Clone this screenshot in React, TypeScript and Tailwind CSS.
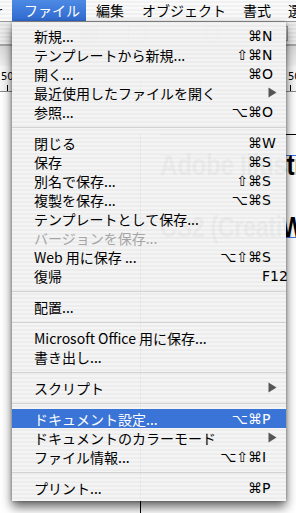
import React from "react"

type Item =
  | { sep: true }
  | {
      sep?: false
      label: string
      mods?: string
      k?: string
      arrow?: boolean
      disabled?: boolean
      active?: boolean
    }

const items: Item[] = [
  { label: "新規...", mods: "⌘", k: "N" },
  { label: "テンプレートから新規...", mods: "⇧⌘", k: "N" },
  { label: "開く...", mods: "⌘", k: "O" },
  { label: "最近使用したファイルを開く", arrow: true },
  { label: "参照...", mods: "⌥⌘", k: "O" },
  { sep: true },
  { label: "閉じる", mods: "⌘", k: "W" },
  { label: "保存", mods: "⌘", k: "S" },
  { label: "別名で保存...", mods: "⇧⌘", k: "S" },
  { label: "複製を保存...", mods: "⌥⌘", k: "S" },
  { label: "テンプレートとして保存..." },
  { label: "バージョンを保存...", disabled: true },
  { label: "Web 用に保存 ...", mods: "⌥⇧⌘", k: "S" },
  { label: "復帰", k: "F12" },
  { sep: true },
  { label: "配置..." },
  { sep: true },
  { label: "Microsoft Office 用に保存..." },
  { label: "書き出し..." },
  { sep: true },
  { label: "スクリプト", arrow: true },
  { sep: true },
  { label: "ドキュメント設定...", mods: "⌥⌘", k: "P", active: true },
  { label: "ドキュメントのカラーモード", arrow: true },
  { label: "ファイル情報...", mods: "⌥⇧⌘", k: "I" },
  { sep: true },
  { label: "プリント...", mods: "⌘", k: "P" },
]

const jp = "font-['Lucida_Grande','Noto_Sans_CJK_JP',sans-serif]"
const sym = "font-['DejaVu_Sans',sans-serif]"

function Arrow({ white }: { white?: boolean }) {
  return (
    <svg width="9" height="11" viewBox="0 0 9 11" className="ml-[6px]">
      <path d="M0.5 0.5 L8.5 5.5 L0.5 10.5 Z" fill={white ? "#fff" : "#555"} />
    </svg>
  )
}

function MenuRow({ item }: { item: Item }) {
  if (item.sep) {
    return (
      <div className="flex h-[12px] items-center">
        <div className="h-px w-full bg-[#d2d2d2]" />
      </div>
    )
  }
  const color = item.active ? "text-white" : item.disabled ? "text-[#a6a6a6]" : "text-black"
  return (
    <div
      className={`flex h-[19px] items-center pl-[22px] ${color} ${
        item.active ? "bg-[#3a74d6]" : ""
      }`}
    >
      <span className={`flex-1 whitespace-nowrap text-[14px] leading-none ${jp}`}>{item.label}</span>
      <span className={`whitespace-nowrap text-right text-[14px] leading-none ${sym}`}>{item.mods}</span>
      <span className={`flex w-[24px] shrink-0 items-center text-[14px] leading-none ${sym}`}>
        {item.arrow ? <Arrow white={item.active} /> : item.k}
      </span>
    </div>
  )
}

function MenuBar() {
  return (
    <div
      className={`flex h-[22px] shrink-0 items-center overflow-hidden whitespace-nowrap border-b border-[#9a9a9a] bg-[repeating-linear-gradient(0deg,#fafafa_0px,#fafafa_2px,#f1f1f1_2px,#f1f1f1_4px)] text-[14px] text-black ${jp}`}
    >
      <span className="ml-[-3px] w-[10px] shrink-0 text-[13px]">r</span>
      <div className="ml-[5px] flex h-[22px] w-[74px] shrink-0 items-center bg-[linear-gradient(#4c8ae4,#2f68cf)] pl-[12px] text-white">
        ファイル
      </div>
      <span className="ml-[10px] shrink-0">編集</span>
      <span className="ml-[18px] shrink-0">オブジェクト</span>
      <span className="ml-[17px] shrink-0">書式</span>
      <span className="ml-[17px] shrink-0">選</span>
    </div>
  )
}

function Workspace() {
  return (
    <div className="relative flex-1">
      {/* control palette */}
      <div className="flex h-[22px] items-center bg-[repeating-linear-gradient(0deg,#ececec_0px,#ececec_2px,#e2e2e2_2px,#e2e2e2_4px)] pl-[80px]">
        <div className="h-[15px] w-[18px] shrink-0 border border-[#9c9c9c] bg-[#bdbdbd]" />
        <div className="ml-[30px] h-[15px] w-[18px] shrink-0 border border-[#9c9c9c] bg-[#eee]" />
        <div className="ml-[60px] h-[15px] w-[12px] shrink-0 border border-[#9c9c9c] bg-[#eee]" />
        <div className="ml-[56px] h-[15px] w-[14px] shrink-0 border border-[#9c9c9c] bg-[#ddd]" />
        <div className={`ml-[44px] flex h-[15px] w-[20px] shrink-0 items-center border border-[#9c9c9c] bg-white text-[11px] ${sym}`}>Im</div>
      </div>
      <div className="h-[2px] bg-[#a5a5a5]" />
      <div className="h-[20px] bg-[linear-gradient(#d9d9d9,#efefef)]" />
      {/* ruler */}
      <div className={`relative h-[26px] border-b border-[#888] bg-[#f6f6f6] text-[10px] leading-none text-black ${sym}`}>
        <span className="absolute left-[1px] top-[6px]">50</span>
        <span className="absolute left-[288px] top-[6px]">50</span>
        <div className="absolute bottom-0 left-0 h-[6px] w-[8px] border-r border-black" />
        <div className="absolute bottom-0 left-[8px] h-[3px] w-[6px] border-r border-black" />
        <div className="absolute bottom-0 left-[290px] h-[6px] w-px bg-black" />
        <div className="absolute bottom-0 left-[140px] h-[10px] w-px bg-[#777]" />
        <div className="absolute bottom-0 left-[80px] h-[10px] w-px bg-[#777]" />
        <div className="absolute bottom-0 left-[200px] h-[10px] w-px bg-[#777]" />
      </div>
      {/* artboard content */}
      <div className="absolute left-[140px] top-[112px] h-[460px] w-px bg-black" />
      <div className="absolute left-[160px] top-[112px] h-px w-[140px] bg-black" />
      <div className="absolute left-[160px] top-[133px] h-px w-[140px] bg-[#3b6fe0]" />
      <div className="absolute left-[160px] top-[215px] h-px w-[140px] bg-[#3b6fe0]" />
      <div className="absolute left-[160px] top-[128px] origin-left scale-x-[0.81] whitespace-nowrap font-['Liberation_Sans',sans-serif] text-[30px] font-bold leading-none tracking-[-0.5px] text-black">
        Adobe Illustrator
      </div>
      <div className="absolute left-[160px] top-[190px] origin-left scale-x-[0.78] whitespace-nowrap font-['Liberation_Sans',sans-serif] text-[30px] font-bold leading-none tracking-[-0.5px] text-black">
        CS2 (CreatiWe
      </div>
    </div>
  )
}

export default function App() {
  return (
    <div className="relative flex h-[513px] w-[296px] flex-col overflow-hidden bg-white">
      <MenuBar />
      <Workspace />
      <div className="absolute left-[12px] top-[22px] w-[274px] bg-[repeating-linear-gradient(0deg,rgba(244,244,244,0.97)_0px,rgba(244,244,244,0.97)_2px,rgba(236,236,236,0.97)_2px,rgba(236,236,236,0.97)_4px)] pb-[4px] pt-[4px] shadow-[0_6px_10px_rgba(0,0,0,0.6),0_0_3px_rgba(0,0,0,0.35)]">
        {items.map((it, i) => (
          <MenuRow key={i} item={it} />
        ))}
      </div>
    </div>
  )
}
